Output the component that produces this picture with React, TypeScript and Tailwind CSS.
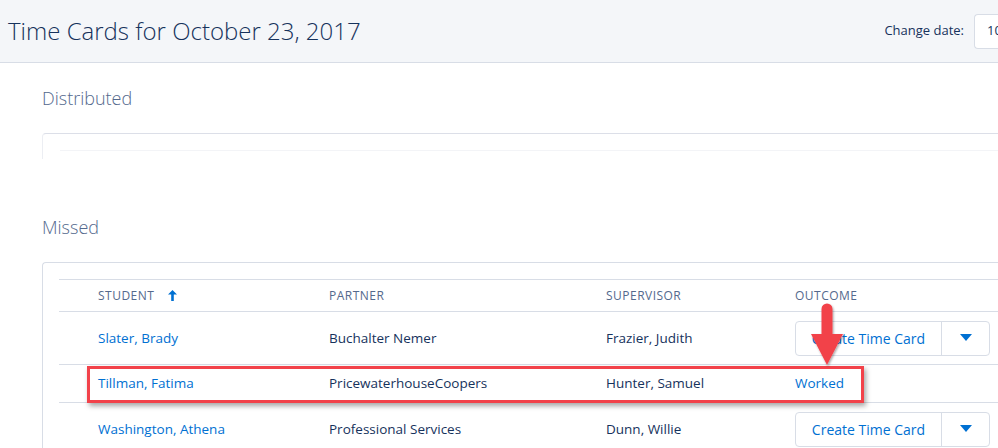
import React from 'react';

type Row = {
  student: string;
  partner: string;
  supervisor: string;
  outcome: 'button' | 'Worked';
};

const rows: Row[] = [
  { student: 'Slater, Brady', partner: 'Buchalter Nemer', supervisor: 'Frazier, Judith', outcome: 'button' },
  { student: 'Tillman, Fatima', partner: 'PricewaterhouseCoopers', supervisor: 'Hunter, Samuel', outcome: 'Worked' },
  { student: 'Washington, Athena', partner: 'Professional Services', supervisor: 'Dunn, Willie', outcome: 'button' },
];

const cols = 'grid grid-cols-[270px_277px_189px_1fr] items-center';

function CreateButton() {
  return (
    <div className="flex h-[35px] w-[195px] items-stretch rounded-[4px] border border-[#d8dde6] bg-white">
      <div className="flex w-[146px] items-center justify-center border-r border-[#d8dde6] text-[14px] text-[#0070d2]">
        Create Time Card
      </div>
      <div className="flex flex-1 items-center justify-center">
        <svg width="12" height="8" viewBox="0 0 12 8">
          <path d="M0 0 H12 L6 7 Z" fill="#0070d2" />
        </svg>
      </div>
    </div>
  );
}

export default function App() {
  return (
    <div
      className="relative h-[448px] w-[998px] overflow-hidden bg-white text-[#16325c]"
      style={{ fontFamily: '"Open Sans", "Liberation Sans", sans-serif' }}
    >
      {/* Page header */}
      <div className="flex h-[63px] items-center border-b border-[#d8dde6] bg-[#f4f6f9] pl-[8px]">
        <h1 className="flex-1 text-[24px] font-light text-[#16325c]">Time Cards for October 23, 2017</h1>
        <span className="mr-[10px] text-[13px] text-[#16325c]">Change date:</span>
        <div className="flex h-[35px] w-[24px] shrink-0 items-center rounded-l-[4px] border-y border-l border-[#d8dde6] bg-white pl-[12px] text-[13px]">
          10
        </div>
      </div>

      <div className="pl-[42px]">
        {/* Distributed */}
        <h2 className="mt-[23px] text-[18px] font-light leading-[24px] text-[#54698d]">Distributed</h2>
        <div className="mt-[23px] h-[26px] w-[1000px] rounded-tl-[4px] border-l border-t border-[#dcdfe8] border-l-[#eceef3]">
          <div className="ml-[17px] mt-[16px] border-t border-[#f3f4f7]" />
        </div>

        {/* Missed */}
        <h2 className="mt-[56px] text-[18px] font-light leading-[24px] text-[#54698d]">Missed</h2>
        <div className="mt-[23px] w-[1000px] rounded-tl-[4px] border-l border-t border-[#d8dde6] pl-[16px] pt-[16px]">
          <div className="border-t border-[#d8dde6]">
            {/* Column headers */}
            <div className={`${cols} h-[32px] border-b border-[#d8dde6] text-[12px] uppercase tracking-[0.04em] text-[#54698d]`}>
              <div className="flex items-center pl-[39px]">
                Student
                <svg className="ml-[14px]" width="9" height="11" viewBox="0 0 9 11">
                  <path d="M4.5 0 L9 4.5 H5.8 V11 H3.2 V4.5 H0 Z" fill="#0070d2" />
                </svg>
              </div>
              <div>Partner</div>
              <div>Supervisor</div>
              <div>Outcome</div>
            </div>

            {rows.map((r) => (
              <div
                key={r.student}
                className={`${cols} relative border-b border-[#d8dde6] text-[13.5px] ${r.outcome === 'button' ? 'h-[53px]' : 'h-[38px]'}`}
              >
                <div className="pl-[39px] text-[#0070d2]">{r.student}</div>
                <div>{r.partner}</div>
                <div>{r.supervisor}</div>
                <div>
                  {r.outcome === 'button' ? (
                    <CreateButton />
                  ) : (
                    <span className="text-[#0070d2]">Worked</span>
                  )}
                </div>
                {r.outcome === 'Worked' && (
                  <div className="pointer-events-none absolute left-[28px] top-[1px] h-[37px] w-[777px] border-[3px] border-[#f2424a] shadow-[2px_3px_5px_rgba(0,0,0,0.35)]" />
                )}
              </div>
            ))}
          </div>
        </div>
      </div>

      {/* Callout arrow */}
      <svg className="absolute left-[806px] top-[301px]" width="42" height="68" viewBox="0 0 42 68">
        <defs>
          <filter id="sh" x="-30%" y="-30%" width="160%" height="160%">
            <feDropShadow dx="1" dy="1.5" stdDeviation="1.2" floodColor="#000" floodOpacity="0.35" />
          </filter>
        </defs>
        <g filter="url(#sh)">
          <path d="M15.5 8 a5.5 5.5 0 0 1 11 0 V33 H37 L21 64 L5 33 H15.5 Z" fill="#f2424a" />
        </g>
      </svg>
    </div>
  );
}
